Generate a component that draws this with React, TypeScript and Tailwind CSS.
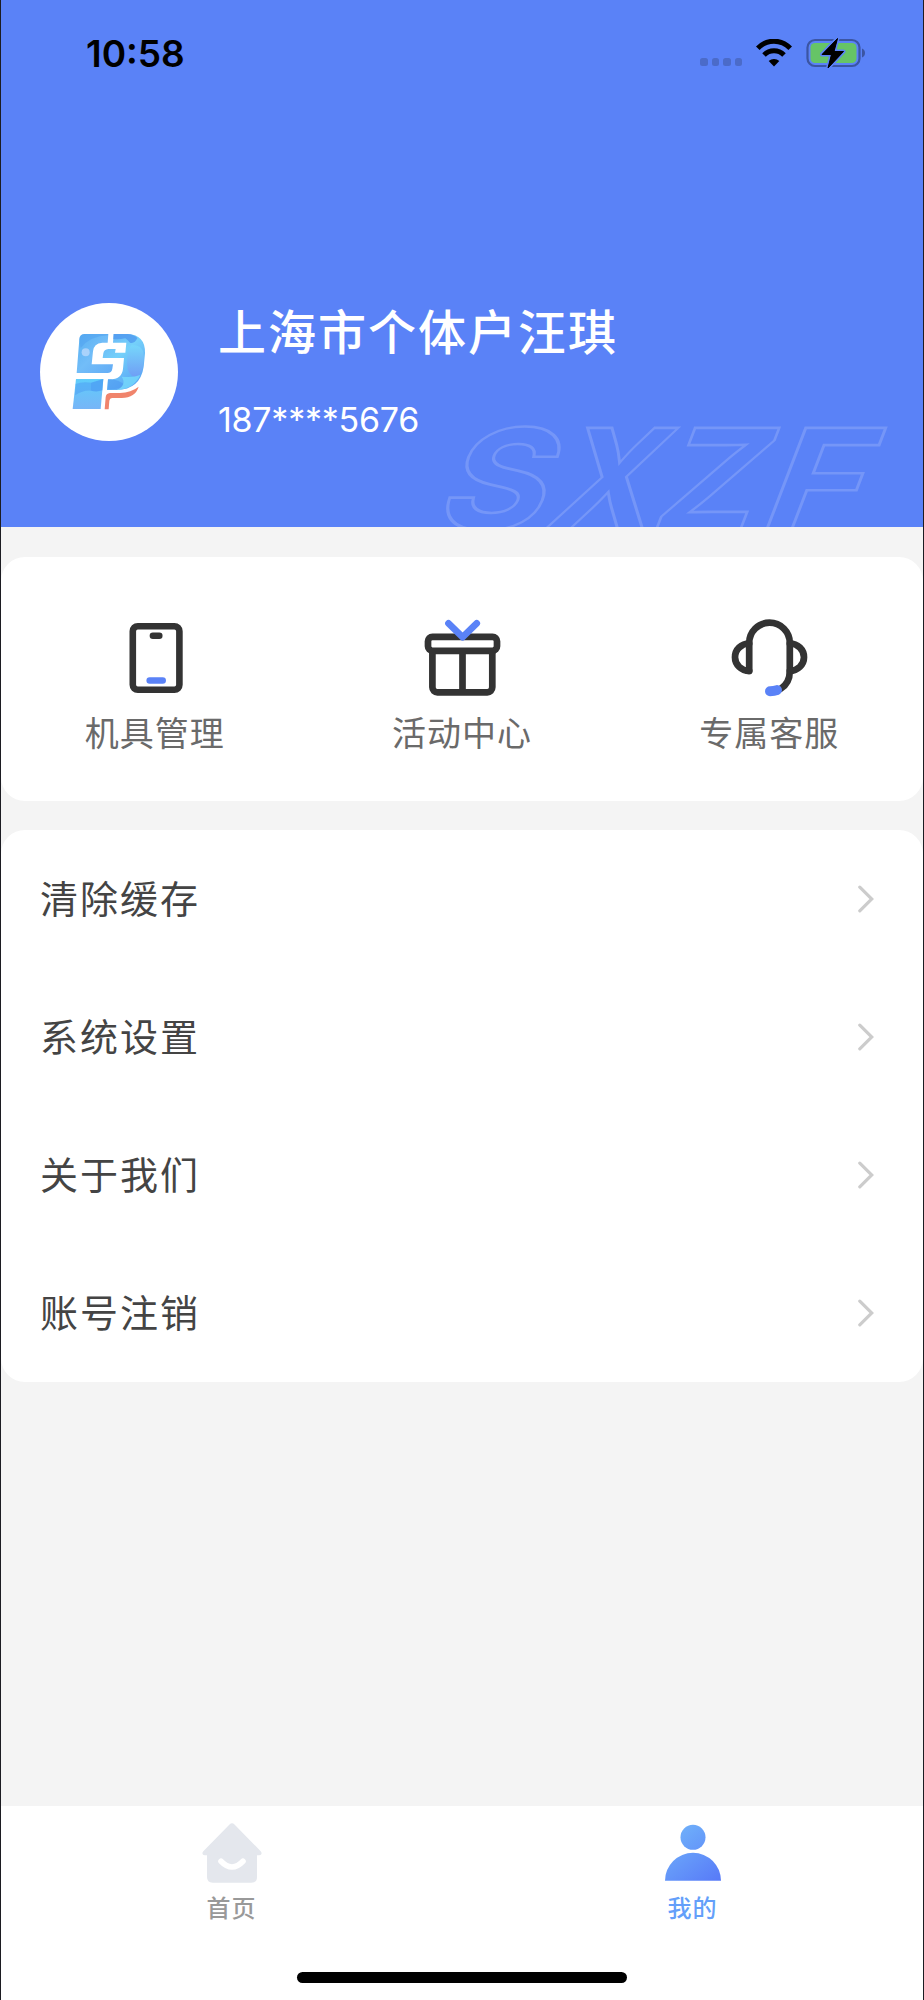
import type { ReactNode } from "react";

type Feature = {
  label: string;
  icon: ReactNode;
};

const features: Feature[] = [
  { label: "机具管理", icon: <DeviceIcon /> },
  { label: "活动中心", icon: <GiftIcon /> },
  { label: "专属客服", icon: <HeadsetIcon /> },
];

const menuItems = ["清除缓存", "系统设置", "关于我们", "账号注销"];

function DeviceIcon() {
  return (
    <svg className="size-[90px]" fill="none" viewBox="0 0 90 90">
      <rect height="63.6" rx="5" stroke="#333" strokeWidth="6.6" width="46.6" x="22.8" y="16.2" />
      <path d="M42.900 25.700h6.400" stroke="#333" strokeLinecap="round" strokeWidth="6.500" />
      <path d="M39.700 70.500h13" stroke="#5a82f7" strokeLinecap="round" strokeWidth="6.500" />
    </svg>
  );
}

function GiftIcon() {
  return (
    <svg className="size-[90px]" fill="none" viewBox="0 0 90 90">
      <g stroke="#333" strokeWidth="6.7">
        <rect height="14" rx="4.5" width="69" x="11" y="26.8" />
        <path d="M15.4 41v36.3a5 5 0 0 0 5 5h49.900a5 5 0 0 0 5-5V41M45.500 41v41" />
      </g>
      <path
        d="m31.500 13.300 14.100 13.900 14.100-13.900"
        stroke="#5a82f7"
        strokeLinecap="round"
        strokeLinejoin="round"
        strokeWidth="6.800"
      />
    </svg>
  );
}

function HeadsetIcon() {
  return (
    <svg className="size-[90px]" fill="none" viewBox="0 0 90 90">
      <g stroke="#333" strokeLinecap="round" strokeLinejoin="round" strokeWidth="6.700">
        <path d="M25.200 61V33a20.300 20.300 0 0 1 40.600 0v28c0 8-3.200 14.200-9.400 18" />
        <path d="M25.200 33.500a14.200 13.650 0 0 0 0 27.300M65.800 33.500a14.200 13.650 0 0 1 0 27.300" />
      </g>
      <path d="M46 81.200c2.600 0 5-.3 7-1.100" stroke="#5a82f7" strokeLinecap="round" strokeWidth="10" />
    </svg>
  );
}

function WifiIcon() {
  return (
    <svg className="h-[28px] w-[38px]" fill="none" viewBox="0 0 38 28">
      <path d="M2.800 9.300C12-.2 26-.2 35.200 9.300" stroke="#000" strokeWidth="5" />
      <path d="M9 16c5.600-5.600 14.400-5.600 20 0" stroke="#000" strokeWidth="5" />
      <path d="M19 27.500l-5.300-5.400c3-2.700 7.600-2.700 10.600 0z" fill="#000" />
    </svg>
  );
}

function BatteryIcon() {
  return (
    <svg className="h-[32px] w-[60px]" fill="none" viewBox="0 0 60 32">
      <rect height="26" rx="7.500" stroke="#3b55a3" strokeWidth="2.200" width="52" x="1.500" y="3" />
      <rect fill="#66c466" height="20" rx="4.500" width="46" x="4.500" y="6" />
      <path d="M56 11.500c4 1.500 4 7.500 0 9z" fill="#3b55a3" />
      <path
        d="M31.500 1.500 16 17.500h9.500L22 31l15.500-16.500H28z"
        fill="#000"
        paintOrder="stroke"
        stroke="#5a82f7"
        strokeLinejoin="round"
        strokeWidth="4"
      />
      <path
        d="M31.500 1.500 16 17.500h9.500L22 31l15.500-16.500H28z"
        fill="#000"
        stroke="#000"
        strokeLinejoin="round"
        strokeWidth="1"
      />
    </svg>
  );
}

function BrandLogo() {
  return (
    <svg className="size-[138px]" viewBox="60 69 414 414">
      <defs>
        <linearGradient id="logo-block" x1="0" x2="1" y1="0" y2="1">
          <stop offset="0" stopColor="#57b0f2" />
          <stop offset=".5" stopColor="#72bdf8" />
          <stop offset="1" stopColor="#62acf6" />
        </linearGradient>
        <linearGradient id="logo-bowl" x1="0" x2=".6" y1="0" y2="1">
          <stop offset="0" stopColor="#68b1f5" />
          <stop offset=".45" stopColor="#74d0fa" />
          <stop offset="1" stopColor="#5aa5f5" />
        </linearGradient>
        <linearGradient id="logo-foot" x1="0" x2="0" y1="0" y2="1">
          <stop offset="0" stopColor="#5fcdfb" />
          <stop offset="1" stopColor="#77b5f7" />
        </linearGradient>
        <linearGradient id="logo-drop" x1="0" x2="0" y1="0" y2="1">
          <stop offset="0" stopColor="#76d6fb" />
          <stop offset="1" stopColor="#6f9df5" />
        </linearGradient>
      </defs>
      <circle cx="267" cy="276" fill="#fff" r="207" />
      <path
        d="M193 162h72l-2 26h-16q-26 2-28 26l-4 39h64l-2 13q-2 13-15 13h-92l8-101q1-15 15-16z"
        fill="url(#logo-block)"
      />
      <path d="M182 204q28-36 82-38v-4h-71q-13 0-15 16z" fill="#4fa0ef" opacity=".5" />
      <circle cx="197" cy="217" fill="#a9d2fb" r="12" />
      <path
        d="M281 162h42q54 3 52 58l-4 40q-10 68-82 70h-28l3-32q42 2 45-32l3-32h-64l2-14q2-12 15-13h22l-2 11h31l3-30h-40z"
        fill="url(#logo-bowl)"
      />
      <path d="M281 162h42q18 1 29 12-8 18-22 14-8-9-14-13-20 4-36 2z" fill="#4d97ef" opacity=".75" />
      <path d="M334 196q28-4 36 20 6 60-22 76-26-4-27-42 0-38 13-54z" fill="url(#logo-drop)" />
      <path d="M264 298q30-2 52 18-16 14-54 12z" fill="#4b96f1" opacity=".55" />
      <path d="M305 290q34 4 56-5-20 43-70 45 30-16 14-40z" fill="#76d9fb" opacity=".8" />
      <path d="M168 297h82l-8 90h-84z" fill="url(#logo-foot)" />
      <path d="M167 312q20-8 46-4v24q-24-2-48 14z" fill="#4b9bf3" opacity=".5" />
      <path d="M213 308l37-11-3 34q-16 6-34 1z" fill="#4b9bf3" opacity=".75" />
      <path
        d="M356 320q-10 33-51 34h-29q-7 0-8 8l-2 26h-12l3-36q1-12 13-13h30q33-1 56-19z"
        fill="#f0846c"
      />
    </svg>
  );
}

// Outlined brand lettering that runs off the bottom edge of the header.
function Watermark() {
  return (
    <svg
      aria-hidden="true"
      className="absolute right-0 bottom-0 h-[127px] w-[504px]"
      viewBox="420 400 504 127"
    >
      <g
        fill="none"
        fontFamily="Inter"
        fontSize="139"
        fontWeight="700"
        stroke="#7596f8"
        strokeWidth="2.600"
        transform="translate(1 528.500) skewX(-21)"
      >
        <text lengthAdjust="spacingAndGlyphs" textLength="107" x="431">S</text>
        <text lengthAdjust="spacingAndGlyphs" textLength="104" x="542">X</text>
        <text lengthAdjust="spacingAndGlyphs" textLength="101" x="648">Z</text>
        <text lengthAdjust="spacingAndGlyphs" textLength="98" x="756">F</text>
      </g>
    </svg>
  );
}

function ChevronIcon() {
  return (
    <svg className="h-[28px] w-[16px]" fill="none" viewBox="0 0 16 28">
      <path d="m1.800 2.200 12 11.800-12 11.800" stroke="#ccc" strokeLinecap="round" strokeWidth="3.200" />
    </svg>
  );
}

function HomeIcon() {
  return (
    <svg className="size-[60px]" fill="none" viewBox="0 0 60 60">
      <path
        d="M27.500 1.500q2.500-2.300 5 0l26.200 26.700c1.700 1.900.8 4-1.500 4H55V54q0 5.700-5.700 5.700H10.700Q5 59.700 5 54V32.200H2.800c-2.300 0-3.200-2.100-1.500-4z"
        fill="#e4e7ed"
      />
      <path d="M19 38.300q11 11.500 22 0" stroke="#fff" strokeLinecap="round" strokeWidth="5.600" />
    </svg>
  );
}

function UserIcon() {
  return (
    <svg className="size-[60px]" viewBox="0 0 60 60">
      <defs>
        <linearGradient gradientUnits="userSpaceOnUse" id="user" x1="12" x2="54" y1="4" y2="58">
          <stop offset="0" stopColor="#70b2fa" />
          <stop offset="1" stopColor="#587bf8" />
        </linearGradient>
      </defs>
      <circle cx="30" cy="14.300" fill="url(#user)" r="12.500" />
      <path d="M2 57.800a28 28 0 0 1 56 0z" fill="url(#user)" />
    </svg>
  );
}

function StatusBar() {
  return (
    <div className="flex h-[106px] items-center justify-between pr-[57px] pl-[85px]">
      <span className="font-['Inter'] text-[37px] leading-none font-semibold text-black">
        10:58
      </span>
      <div className="flex items-center">
        <div className="mt-[18px] mr-[13px] flex gap-1">
          {[0, 1, 2, 3].map((dot) => (
            <span className="size-[7.5px] rounded-[2.5px] bg-[#4b6bc9]" key={dot} />
          ))}
        </div>
        <WifiIcon />
        <div className="ml-[13px]">
          <BatteryIcon />
        </div>
      </div>
    </div>
  );
}

function ProfileHeader() {
  return (
    <header className="relative h-[527px] shrink-0 overflow-hidden bg-[#5a82f7] text-white">
      <Watermark />
      <StatusBar />
      <div className="mt-[197px] flex items-start pl-[39px]">
        <BrandLogo />
        <div className="-mt-[4px] ml-[40px] flex flex-col">
          <h1 className="text-[48px] leading-[60px] font-medium tracking-[2px]">
            上海市个体户汪琪
          </h1>
          <p className="mt-[39px] font-['Inter'] text-[34px] leading-[44px] tracking-[-0.25px]">
            187****5676
          </p>
        </div>
      </div>
    </header>
  );
}

function TabBar() {
  return (
    <nav className="mt-auto flex h-[194px] flex-col bg-white">
      <div className="grid grid-cols-2 pt-[17px] text-[24px] leading-[32px] font-medium tracking-[1px]">
        <a className="flex flex-col items-center gap-[8px] text-[#999]">
          <HomeIcon />
          首页
        </a>
        <a className="flex flex-col items-center gap-[8px] text-[#649ffa]">
          <UserIcon />
          我的
        </a>
      </div>
      <div className="mx-auto mt-auto mb-[17px] h-[11px] w-[330px] rounded-full bg-black" />
    </nav>
  );
}

export default function App() {
  return (
    <div className="flex h-[2000px] w-[924px] flex-col border-x border-[#1c1c22] bg-[#f4f4f4] font-['Noto_Sans_CJK_SC',sans-serif]">
      <ProfileHeader />
      <section className="mt-[30px] grid h-[244px] grid-cols-3 rounded-[24px] bg-white pt-[53px]">
        {features.map((feature) => (
          <div className="flex flex-col items-center" key={feature.label}>
            {feature.icon}
            <span className="mt-[9px] text-[34px] leading-[46px] tracking-[1px] text-[#6a6a6a]">
              {feature.label}
            </span>
          </div>
        ))}
      </section>
      <ul className="mt-[29px] rounded-[24px] bg-white">
        {menuItems.map((item) => (
          <li className="flex h-[138px] items-center justify-between pr-[49px] pl-[39px]" key={item}>
            <span className="-mt-[4px] text-[38px] leading-[50px] tracking-[2px] text-[#444]">
              {item}
            </span>
            <ChevronIcon />
          </li>
        ))}
      </ul>
      <TabBar />
    </div>
  );
}
